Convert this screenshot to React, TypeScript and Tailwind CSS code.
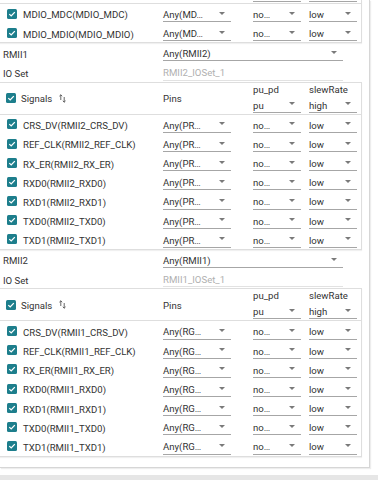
type SelectProps = { value: string; w: string; disabled?: boolean };

function Caret() {
  return (
    <svg width="6" height="3" viewBox="0 0 6 3" className="shrink-0">
      <path d="M0 0H6L3 3Z" fill="#7a7a7a" />
    </svg>
  );
}

function Check() {
  return (
    <span className="flex h-[10px] w-[10px] shrink-0 items-center justify-center rounded-[1.5px] bg-[#1d7e8c]">
      <svg width="8" height="8" viewBox="0 0 8 8">
        <path d="M1.3 4.1 L3.2 5.9 L6.8 2.1" fill="none" stroke="#fff" strokeWidth="1.3" />
      </svg>
    </span>
  );
}

function SortIcon() {
  return (
    <svg width="7" height="9" viewBox="0 0 7 9" className="shrink-0">
      <path d="M1.8 6V0.8M0.4 2.2L1.8 0.8L3.2 2.2" fill="none" stroke="#555" strokeWidth="0.9" />
      <path d="M5.2 3V8.2M3.8 6.8L5.2 8.2L6.6 6.8" fill="none" stroke="#555" strokeWidth="0.9" />
    </svg>
  );
}

function Select({ value, w, disabled }: SelectProps) {
  return (
    <div
      className={`flex h-[17px] items-center justify-between pr-[6px] border-b ${w} ${
        disabled ? 'border-[#e2e2e2] text-[#b0b0b0]' : 'border-[#a6a6a6]'
      }`}
    >
      <span className="whitespace-nowrap pt-[4px]">{value}</span>
      {!disabled && <Caret />}
    </div>
  );
}

function HeaderRow() {
  return (
    <div className="flex h-[32px] border-b border-[#dedede]">
      <div className="flex w-[163px] items-center gap-[5px] pl-[6px]">
        <Check />
        <span className="pt-[2px]">Signals</span>
        <span className="ml-[2px]">
          <SortIcon />
        </span>
      </div>
      <div className="flex w-[90px] items-center pt-[2px]">Pins</div>
      <div className="flex w-[56px] flex-col">
        <div className="h-[11px] pt-[1px] leading-[11px]">pu_pd</div>
        <div className="mt-[2px]">
          <Select value="pu" w="w-[48px]" />
        </div>
      </div>
      <div className="flex flex-col">
        <div className="h-[11px] pt-[1px] leading-[11px]">slewRate</div>
        <div className="mt-[2px]">
          <Select value="high" w="w-[48px]" />
        </div>
      </div>
    </div>
  );
}

// header of a table that has scrolled out of view: only the underline ends show
function ScrolledHeader() {
  return (
    <div className="flex h-[4px] border-b border-[#dedede]">
      <div className="w-[253px]" />
      <div className="w-[56px]">
        <div className="h-[2px] w-[48px] border-b border-[#a6a6a6]" />
      </div>
      <div className="h-[2px] w-[48px] border-b border-[#a6a6a6]" />
    </div>
  );
}

function SignalRow({ name, pin }: { name: string; pin: string }) {
  return (
    <div className="flex h-[19.2px] items-center">
      <div className="flex w-[163px] items-center gap-[6px] pl-[7px]">
        <Check />
        <span className="whitespace-nowrap pt-[4px]">{name}</span>
      </div>
      <div className="w-[90px]">
        <Select value={pin} w="w-[68px]" />
      </div>
      <div className="w-[56px]">
        <Select value="no…" w="w-[48px]" />
      </div>
      <Select value="low" w="w-[48px]" />
    </div>
  );
}

function SignalTable({ rows, pin, scrolled }: { rows: string[]; pin: string; scrolled?: boolean }) {
  return (
    <div
      className={`-ml-px w-[363px] border-x border-b border-[#dedede] shadow-[0_1px_1px_rgba(0,0,0,0.06)] ${
        scrolled ? '' : 'border-t'
      }`}
    >
      {scrolled ? <ScrolledHeader /> : <HeaderRow />}
      {rows.map((r) => (
        <SignalRow key={r} name={r} pin={pin} />
      ))}
    </div>
  );
}

function Section({ label, value, ioSet }: { label: string; value: string; ioSet: string }) {
  return (
    <div className="flex flex-col">
      <div className="flex h-[19.2px] items-center">
        <div className="w-[163px] pl-[3px] pt-[4px]">{label}</div>
        <Select value={value} w="w-[180px]" />
      </div>
      <div className="flex h-[19.2px] items-center">
        <div className="w-[163px] pl-[3px] pt-[4px]">IO Set</div>
        <Select value={ioSet} w="w-[180px]" disabled />
      </div>
    </div>
  );
}

const sigs = (p: string) => [
  `CRS_DV(${p}_CRS_DV)`,
  `REF_CLK(${p}_REF_CLK)`,
  `RX_ER(${p}_RX_ER)`,
  `RXD0(${p}_RXD0)`,
  `RXD1(${p}_RXD1)`,
  `TXD0(${p}_TXD0)`,
  `TXD1(${p}_TXD1)`,
];

export default function App() {
  return (
    <div className="flex h-[480px] w-[378px] flex-col justify-between overflow-hidden bg-white font-['Roboto',sans-serif] text-[9.6px] text-[#333]">
      <div className="h-[468px] w-[370px] overflow-hidden border-r border-b border-[#d6d6d6] shadow-[1px_1px_1px_rgba(0,0,0,0.07)]">
        <div className="flex flex-col">
          <SignalTable rows={['MDIO_MDC(MDIO_MDC)', 'MDIO_MDIO(MDIO_MDIO)']} pin="Any(MD…" scrolled />
          <Section label="RMII1" value="Any(RMII2)" ioSet="RMII2_IOSet_1" />
          <SignalTable rows={sigs('RMII2')} pin="Any(PR…" />
          <Section label="RMII2" value="Any(RMII1)" ioSet="RMII1_IOSet_1" />
          <SignalTable rows={sigs('RMII1')} pin="Any(RG…" />
        </div>
      </div>
      <div className="h-[5px] bg-[#e6e6e6]" />
    </div>
  );
}
